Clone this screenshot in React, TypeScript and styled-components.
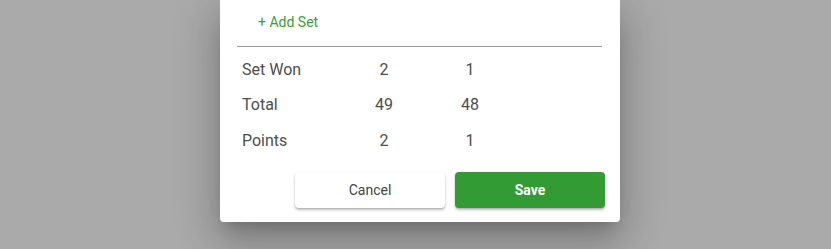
import styled, { createGlobalStyle } from "styled-components";

const GlobalStyle = createGlobalStyle`
  html, body {
    margin: 0;
    padding: 0;
    overflow: hidden;
    font-family: Roboto, "Liberation Sans", sans-serif;
  }
`;

type Row = { label: string; home: string; away: string };

const rows: Row[] = [
  { label: "Set Won", home: "2", away: "1" },
  { label: "Total", home: "49", away: "48" },
  { label: "Points", home: "2", away: "1" },
];

const App = () => {
  return (
    <>
      <GlobalStyle />
      <Backdrop>
        <Dialog>
          <AddSetButton type="button">+ Add Set</AddSetButton>
          <Divider />
          <Summary>
            {rows.map((row) => (
              <SummaryRow key={row.label}>
                <Label>{row.label}</Label>
                <Value>{row.home}</Value>
                <Value>{row.away}</Value>
              </SummaryRow>
            ))}
          </Summary>
          <Actions>
            <ActionButton type="button">Cancel</ActionButton>
            <ActionButton type="button" primary>
              Save
            </ActionButton>
          </Actions>
        </Dialog>
      </Backdrop>
    </>
  );
};

const Backdrop = styled.div`
  width: 100vw;
  height: 100vh;
  box-sizing: border-box;
  padding-left: 9px;
  background-color: #aaaaaa;
  display: flex;
  justify-content: center;
  align-items: flex-start;
`;

const Dialog = styled.div`
  width: 400px;
  box-sizing: border-box;
  background-color: #fff;
  border-radius: 0 0 4px 4px;
  padding: 0 15px 14px 17px;
  display: flex;
  flex-direction: column;
  box-shadow: 0 11px 15px -7px rgba(0, 0, 0, 0.2),
    0 24px 38px 3px rgba(0, 0, 0, 0.14), 0 9px 46px 8px rgba(0, 0, 0, 0.12);
`;

const AddSetButton = styled.button`
  align-self: flex-start;
  height: 44px;
  margin: 0 0 2px 0;
  padding: 0 0 0 21px;
  border: 0;
  background: none;
  color: #36a136;
  font-family: Roboto, "Liberation Sans", sans-serif;
  font-size: 14px;
  line-height: 44px;
  cursor: pointer;
`;

const Divider = styled.hr`
  width: 365px;
  height: 1px;
  margin: 0;
  border: 0;
  background-color: #9a9a9a;
`;

const Summary = styled.div`
  margin-top: 4.5px;
  display: flex;
  flex-direction: column;
`;

const SummaryRow = styled.div`
  display: grid;
  grid-template-columns: 104px 86px 86px;
  height: 35.5px;
  align-items: center;
  font-size: 16px;
  color: #4d4d4d;
`;

const Label = styled.span`
  padding-left: 5px;
`;

const Value = styled.span`
  text-align: center;
`;

const Actions = styled.div`
  margin-top: 14px;
  display: flex;
  justify-content: flex-end;
  gap: 10px;
`;

const ActionButton = styled.button<{ primary?: boolean }>`
  width: 150px;
  height: 36px;
  border: 0;
  border-radius: 4px;
  font-family: Roboto, "Liberation Sans", sans-serif;
  font-size: 14px;
  font-weight: ${(p) => (p.primary ? 700 : 400)};
  color: ${(p) => (p.primary ? "#fff" : "#444")};
  background-color: ${(p) => (p.primary ? "#339b33" : "#fff")};
  box-shadow: 0 2px 3px rgba(0, 0, 0, 0.25), 0 1px 1px rgba(0, 0, 0, 0.1);
  cursor: pointer;
`;

export default App;
